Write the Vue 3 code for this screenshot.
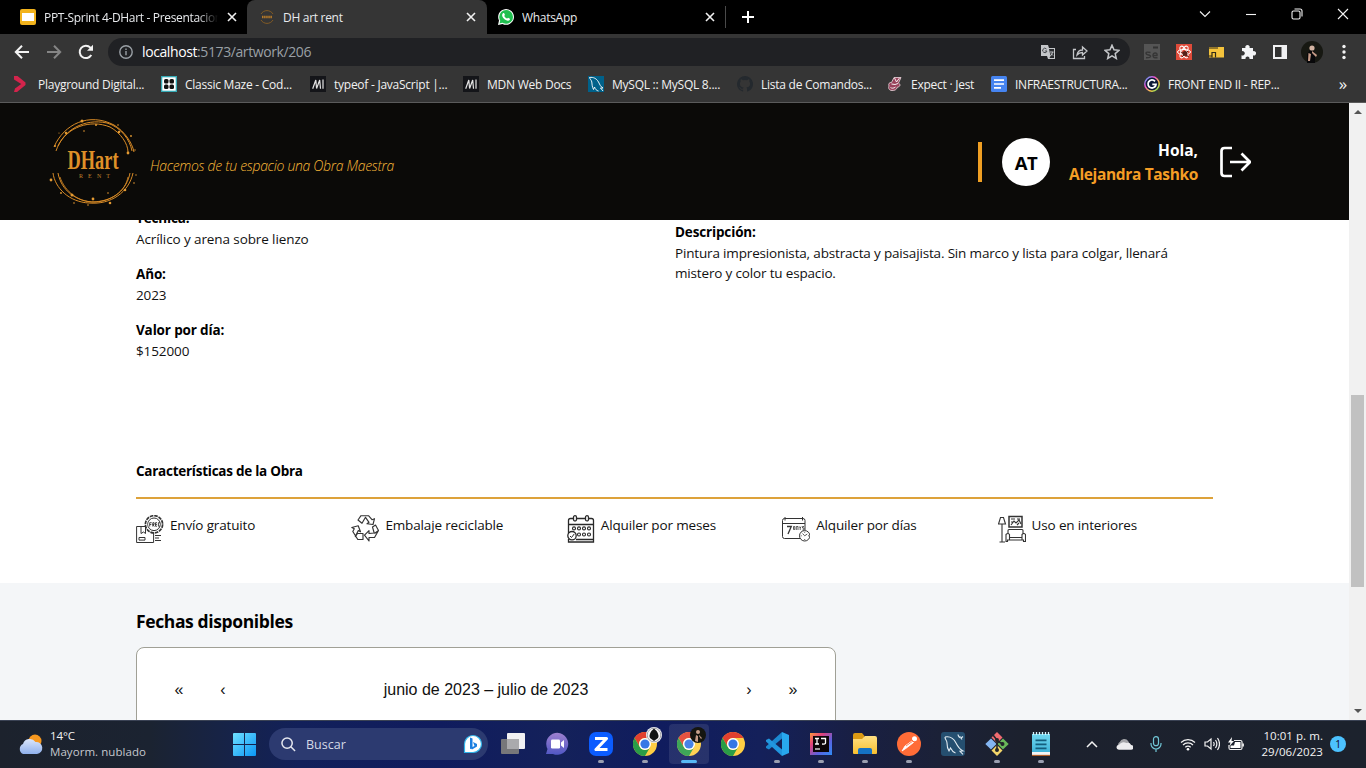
<script setup>
const tabs = [
  { title: 'PPT-Sprint 4-DHart - Presentacion', icon: 'slides', cls: 'first' },
  { title: 'DH art rent', icon: 'dhmini', cls: 'active' },
  { title: 'WhatsApp', icon: 'whatsapp', cls: 'last' },
]
const bookmarks = [
  { label: 'Playground Digital...', icon: 'play' },
  { label: 'Classic Maze - Cod...', icon: 'maze' },
  { label: 'typeof - JavaScript |...', icon: 'mdn' },
  { label: 'MDN Web Docs', icon: 'mdn' },
  { label: 'MySQL :: MySQL 8....', icon: 'mysql' },
  { label: 'Lista de Comandos...', icon: 'github' },
  { label: 'Expect · Jest', icon: 'jest' },
  { label: 'INFRAESTRUCTURA...', icon: 'docs' },
  { label: 'FRONT END II - REP...', icon: 'gring' },
]
const features = [
  { label: 'Envío gratuito', icon: 'free' },
  { label: 'Embalaje reciclable', icon: 'recycle' },
  { label: 'Alquiler por meses', icon: 'months' },
  { label: 'Alquiler por días', icon: 'days' },
  { label: 'Uso en interiores', icon: 'indoor' },
]
const apps = [
  { icon: 'taskview' }, { icon: 'chat' }, { icon: 'zoomapp', run: true },
  { icon: 'chrome', run: true, badge: 'dark' }, { icon: 'chrome', run: true, badge: 'photo', focus: true },
  { icon: 'chrome' }, { icon: 'vscode', run: true }, { icon: 'idea', run: true },
  { icon: 'folder', run: true }, { icon: 'postman', run: true }, { icon: 'workbench' },
  { icon: 'git', run: true }, { icon: 'notepad', run: true },
]
</script>

<template>
  <svg class="defs" aria-hidden="true">
    <defs>
      <linearGradient id="win" x1="0" y1="0" x2="1" y2="1"><stop offset="0" stop-color="#6fe0ff" /><stop offset="1" stop-color="#0a96f5" /></linearGradient>
      <linearGradient id="fold" x1="0" y1="0" x2="0" y2="1"><stop offset="0" stop-color="#ffe083" /><stop offset="1" stop-color="#f8bf2f" /></linearGradient>
      <linearGradient id="cloud" x1="0" y1="0" x2="0" y2="1"><stop offset="0" stop-color="#dbe6fb" /><stop offset="1" stop-color="#8fb0ec" /></linearGradient>
      <linearGradient id="chatg" x1="0" y1="0" x2="0" y2="1"><stop offset="0" stop-color="#9d80cf" /><stop offset="1" stop-color="#5057c4" /></linearGradient>
      <linearGradient id="ideag" x1="0" y1="0" x2="1" y2="1"><stop offset="0" stop-color="#fc9a3c" /><stop offset=".3" stop-color="#e0417c" /><stop offset=".65" stop-color="#5a62e0" /><stop offset="1" stop-color="#2f8df5" /></linearGradient>
      <linearGradient id="rainbow" x1="0" y1="0" x2="1" y2="1"><stop offset="0" stop-color="#3fb8ff" /><stop offset=".35" stop-color="#f04bd0" /><stop offset=".7" stop-color="#ffd43a" /><stop offset="1" stop-color="#45e07c" /></linearGradient>
      <linearGradient id="noteg" x1="0" y1="0" x2="0" y2="1"><stop offset="0" stop-color="#71d8f0" /><stop offset="1" stop-color="#3db2d8" /></linearGradient>
    </defs>
    <symbol id="slides" viewBox="0 0 16 16"><rect width="16" height="16" rx="2" fill="#f2b31c" /><rect x="2" y="4" width="12" height="8" fill="#fff" /></symbol>
    <symbol id="dhmini" viewBox="0 0 16 16"><g fill="none" stroke="#8a5f23" stroke-width=".9"><path d="M2 5A7 7 0 0 1 14 5M2 11a7 7 0 0 0 12 0" /><path d="M3 8h10" stroke="#b67a28" stroke-width="2.400" stroke-dasharray="1.500 .6" /></g></symbol>
    <symbol id="whatsapp" viewBox="0 0 16 16"><path d="M0 16l1-4.500A7.900 7.900 0 1 1 4.500 15z" fill="#fff" /><circle cx="8.100" cy="7.900" r="6.900" fill="#1fbf4f" /><path d="M1.500 14.500l1-3.500 2.500 2.500z" fill="#1fbf4f" /><path d="M5 4.300c.8-.8 1.300-.3 1.900 1.400.1.500-.7 1-.6 1.300.5 1.100 1.400 2 2.600 2.500.4.100.8-1 1.200-.8 1.800.8 2.200 1 1.700 2-1 1.800-4 1-6-1.200S3.700 5.500 5 4.300z" fill="#fff" /></symbol>
    <symbol id="play" viewBox="0 0 16 16"><path d="M0 0h3.500l8 6.500v2.500L3 16H0l1-3.500L7.200 8 0 3.500z" fill="#d3244c" /></symbol>
    <symbol id="maze" viewBox="0 0 16 16"><rect width="16" height="16" fill="#35a9b5" /><rect x="1.300" y="1.300" width="13.400" height="13.400" fill="#fff" /><g fill="#111"><rect x="3" y="3" width="4.500" height="4.500" rx="1.500" /><rect x="8.500" y="3" width="4.500" height="4.500" rx="1.500" /><rect x="3" y="8.500" width="4.500" height="4.500" rx="1.500" /><rect x="8.500" y="8.500" width="4.500" height="4.500" rx="1.500" /></g></symbol>
    <symbol id="mdn" viewBox="0 0 16 16"><rect width="16" height="16" fill="#141519" /><path d="M2.700 12.800L5.800 4 6.600 12.500 9.700 4l.8 8.800M13 3.500v9.300" fill="none" stroke="#e4e4e4" stroke-width="1.200" stroke-linejoin="bevel" /></symbol>
    <symbol id="mysql" viewBox="0 0 16 16"><rect width="16" height="16" fill="#00618a" /><path d="M1.500 1.500c4-.6 7 1 9 4.500 1.500 3 2 4.500 4.500 6l-2.500 0 2.500 3M1.500 1.500c.5 2 2 2.500 2.300 4.500.4 3 .2 4.500 1.700 7.500l1-2.500c1 2.500 2 3.500 4 4" fill="none" stroke="#fff" stroke-width=".9" /></symbol>
    <symbol id="github" viewBox="0 0 16 16"><path fill="#24292e" d="M8 0a8 8 0 0 0-2.530 15.590c.4.070.55-.17.55-.38v-1.490c-2.230.48-2.700-.94-2.700-.94-.36-.93-.89-1.170-.89-1.170-.73-.5.050-.49.050-.49.8.060 1.230.83 1.230.83.710 1.230 1.870.87 2.330.67.070-.52.280-.87.510-1.070-1.780-.2-3.640-.89-3.640-3.950 0-.87.310-1.590.82-2.150-.08-.2-.36-1.020.08-2.120 0 0 .67-.21 2.200.82a7.600 7.600 0 0 1 4 0c1.530-1.040 2.200-.82 2.200-.82.440 1.100.16 1.920.080 2.120.51.560.82 1.270.82 2.150 0 3.070-1.870 3.750-3.650 3.950.29.250.54.730.54 1.480v2.190c0 .21.150.46.550.38A8 8 0 0 0 8 0z" /></symbol>
    <symbol id="jest" viewBox="0 0 16 16"><path d="M7 1.500h7l-2.500 5.500c2.500 1.500 1.500 4-1 4-1 3-3 3.500-5.500 3.500-3 0-4-2.500-3-4.500C1 8 2.500 6 4.500 6.500z" fill="#99425b" stroke="#eed9df" stroke-width=".8" /><path d="M7.500 2l2 4 3-4M4.500 8l3.500 .5 3-1M3.500 11.500c1.500 1 3 1 5-.5" fill="none" stroke="#fff" stroke-width=".9" /></symbol>
    <symbol id="docs" viewBox="0 0 16 16"><rect width="16" height="16" rx="1.500" fill="#4684f0" /><path d="M3 4.200h10M3 8h10M3 11.800h7" stroke="#fff" stroke-width="1.700" /></symbol>
    <symbol id="gring" viewBox="0 0 16 16"><circle cx="8" cy="8" r="7.200" fill="#0c1a38" stroke="url(#rainbow)" stroke-width="1.500" /><path d="M11 5.300A4 4 0 1 0 12 8.300H8.300" fill="none" stroke="#fff" stroke-width="1.800" /></symbol>

    <symbol id="free" viewBox="0 0 28 28"><g fill="none" stroke="#333" stroke-width="1"><path d="M9 11.500H.6v16h17V18M5 11.500v7l2.500-1.500 2 1.500v-7M3 22.500h6v2.600H3zM19 20.500h6M19 23h4M19 25.500h6" /><circle cx="18" cy="9.300" r="6.300" /><circle cx="18" cy="9.300" r="8.600" stroke-width="1.700" stroke-dasharray="3.600 .9" /></g><path d="M12.600 7.500h10.800v3.700H12.600z" fill="#fff" /><path d="M13.700 11.500V7.700h2M13.700 9.500h1.600M16.800 11.500V7.700h1.300v1.800h-1.300l1.500 2M21 7.700h-1.500v3.500H21M19.500 9.400H21M24 7.700h-1.600v3.500H24" fill="none" stroke="#333" stroke-width=".9" /></symbol>
    <symbol id="recycle" viewBox="0 0 28 28"><g fill="none" stroke="#333" stroke-width="1.150" stroke-linejoin="round"><path d="M7 5l3-4.300h7.500l3.500 4 2.500-1-1.500 5.800-6-.7 2-1.500-3.500-5-3.500 6zM10 .7h5" /><path d="M21.500 12l3-2 3 5.500-4 7h-5.500V26l-4.500-5.800 4.500-4.500v2.800l5.200-.5zM27.500 15.500l-4 3" /><path d="M12 18.500v6H6.800l-5-8 1.500-2.700L.8 12.500l6.400-1.700 2.300 6-2.200-1.200-3 6 2.200-3.200z" /></g></symbol>
    <symbol id="months" viewBox="0 0 28 28"><g fill="none" stroke="#292929" stroke-width="1.300"><path d="M1.500 18V5.500q0-2 2-2H6M9.500 3.500h9M22 3.500h2.500q2 0 2 2V27H1.500V24M1.500 9.500h25M9 24.500h18" /><rect x="6.500" y=".7" width="3" height="5.200" rx="1.500" /><rect x="18.500" y=".7" width="3" height="5.200" rx="1.500" /><g stroke-width="1.100"><circle cx="7" cy="13.400" r="1.500" /><circle cx="12" cy="13.400" r="1.500" /><circle cx="17" cy="13.400" r="1.500" /><circle cx="22" cy="13.400" r="1.500" /><circle cx="12" cy="19.500" r="1.500" /><circle cx="17" cy="19.500" r="1.500" /><circle cx="22" cy="19.500" r="1.500" /></g><circle cx="5" cy="20.700" r="4.200" fill="#fff" /><path d="M3 21l1.500 1.500L7.200 19" stroke-width="1" /></g></symbol>
    <symbol id="days" viewBox="0 0 28 28"><g fill="none" stroke="#333" stroke-width="1"><path d="M18 23.500H2.500q-2 0-2-2v-16q0-2 2-2h18.500q2 0 2 2V15M.5 8.500H23M3 2v3.500M20.500 2v3.500M4 3.500h15" /><path d="M5 11.500h4.300L6 19" stroke-width="1.300" /><path d="M11.500 11.500v3h1.300v-3zM14.300 15v-3.500H16V15M17.300 11.500l.9 1.500.9-1.500M18.200 13v2M22 11.500h-1.500V13H22v2h-1.500" stroke-width=".8" /><circle cx="22.700" cy="20.800" r="5.200" fill="#fff" /><path d="M20.500 18.500l2.200 2.300 2.600-1.800M22.700 16.800v1M22.700 24v1M18.700 20.800h1M26 20.800h1" stroke-width=".8" /></g></symbol>
    <symbol id="indoor" viewBox="0 0 28 28"><g fill="none" stroke="#333" stroke-width="1.100"><path d="M2.500 2.500h3L7.500 9h-7zM4 9v17.500M1.500 27h5.500" /><rect x="11" y="1.500" width="13" height="10.500" stroke-width="1.500" /><path d="M13 10l3-4 2 2 3-3 2 4M13 4h4M19 4h3M13 7h2M19 10l2-2" /><path d="M10 18.500v-3q0-1 1-1h13q1 0 1 1v3M9.500 26.500H8v-7q2-2 3.500 0v3H24v-3q2-2 3.500 0v7h-2V25H9.500zM11.500 22.500V25M24 22.500V25" /></g></symbol>

    <symbol id="taskview" viewBox="0 0 24 24"><rect x="6" y="1" width="18" height="16" rx="1" fill="#f0f0f2" /><rect x="0" y="7" width="18" height="15" rx="1" fill="#77777a" /><rect x="6" y="7" width="12" height="10" fill="#aaaaad" /></symbol>
    <symbol id="chat" viewBox="0 0 24 24"><path d="M1 22l1.500-5A11 11 0 1 1 8 22z" fill="url(#chatg)" /><rect x="6" y="7.500" width="9" height="9" rx="1.300" fill="#fff" /><path d="M16 10.500l3-2.500v8l-3-2.500z" fill="#fff" /></symbol>
    <symbol id="zoomapp" viewBox="0 0 24 24"><rect width="24" height="24" rx="7" fill="#0b5cff" /><path d="M6 6.500h11.500L7 17.500h11.500" fill="none" stroke="#fff" stroke-width="3.200" stroke-linejoin="round" /></symbol>
    <symbol id="chrome" viewBox="0 0 24 24"><circle cx="12" cy="12" r="12" fill="#ffce43" /><path d="M1.600 6A12 12 0 0 1 22.400 6H12a6 6 0 0 0-5.200 9z" fill="#e2402f" /><path d="M1.600 6A12 12 0 0 0 12 24l5.200-9a6 6 0 0 1-10.400 0z" fill="#2a9d47" /><circle cx="12" cy="12" r="6" fill="#fff" /><circle cx="12" cy="12" r="4.600" fill="#3577e5" /></symbol>
    <symbol id="vscode" viewBox="0 0 24 24"><path d="M17 0l7 3v18l-7 3z" fill="#28a8ee" /><path d="M17 0v6.500L4 17.500 1 16V14.500z" fill="#1b88d1" /><path d="M17 24v-6.500L4 6.500 1 8v1.500z" fill="#2196df" /></symbol>
    <symbol id="idea" viewBox="0 0 24 24"><rect x="1" y="1" width="22" height="22" fill="url(#ideag)" /><rect x="4" y="4" width="16" height="16" fill="#0c0508" /><path d="M6 6.500h4M8 6.500V12M6 12h4M12 6.500h4.500V11q0 1.300-3.500 1" fill="none" stroke="#fff" stroke-width="1.300" /><path d="M6 17h5" stroke="#fff" stroke-width="1.200" /></symbol>
    <symbol id="folder" viewBox="0 0 24 24"><path d="M0 3q0-2 2-2h7l2.500 3v4H0z" fill="#dc9a13" /><path d="M0 7h9l3-3h10q2 0 2 2v15q0 1-1 1H1q-1 0-1-1z" fill="url(#fold)" /><path d="M5 22v-4q0-2 2-2h10q2 0 2 2v4z" fill="#1572c4" /></symbol>
    <symbol id="postman" viewBox="0 0 24 24"><circle cx="12" cy="12" r="12" fill="#ff6c37" /><path d="M5 19l3-5 7-5 1.500 1.500-7 5.500z" fill="#fff" stroke="#fff" stroke-width=".8" /><circle cx="17.500" cy="6.700" r="2.500" fill="#fff" /><path d="M9 14l7-5M15 8l2 2" stroke="#ff6c37" stroke-width=".8" /></symbol>
    <symbol id="workbench" viewBox="0 0 24 24"><rect width="24" height="24" rx="3" fill="#254f70" /><path d="M4 5c5-1 9 2 11 6s3 6 7 8l-3 .3 3 3M4 5c0 3 2 3 2 6s0 5 2 8l1.500-3c1 2 2 4 5 5" fill="none" stroke="#e4edf3" stroke-width="1.100" /><path d="M17 2.500q.5 3 3 3.500l2-1.500M18 5.500l1.500-1M20 6l1 1.500" stroke="#dbe7ef" fill="none" stroke-width="1.200" /></symbol>
    <symbol id="git" viewBox="0 0 24 24"><path d="M12 0l5.500 5.500L12 11 6.500 5.500z" fill="#f06b70" /><path d="M6 6.500L11.500 12 6 17.500.3 12z" fill="#83b5f2" /><path d="M18 6.500l5.700 5.500L18 17.500 12.500 12z" fill="#69b95a" /><path d="M12 13l5.500 5.500L12 24l-5.500-5.500z" fill="#f3d66a" /><g fill="#22252b" stroke="#22252b" stroke-width="1.600"><path d="M8 3l4 5v10M12 9l6 3" fill="none" /><circle cx="12" cy="8" r="1.200" /><circle cx="17.500" cy="12" r="1.200" /><circle cx="12" cy="18" r="1.200" /></g></symbol>
    <symbol id="notepad" viewBox="0 0 24 24"><path d="M3 2h18v19H3z" fill="url(#noteg)" /><path d="M3 20h18v3H3z" fill="#f3f3f3" /><path d="M3 23.500h18" stroke="#b05f28" stroke-width="1.300" /><path d="M6.500 8.300h11M6.500 12.300h11M6.500 16.300h11" stroke="#145e7d" stroke-width="1.700" /><path d="M4.500 0v3M7.500 0v3M10.500 0v3M13.500 0v3M16.500 0v3M19.500 0v3" stroke="#d4f4fc" stroke-width="1.300" /></symbol>
  </svg>

  <div class="screen">
    <div class="tabstrip">
      <div v-for="t in tabs" :key="t.title" class="tab" :class="t.cls">
        <svg class="i16"><use :href="'#' + t.icon" /></svg>
        <span class="tabtitle">{{ t.title }}</span>
        <svg class="x" viewBox="0 0 10 10"><path d="M1 1l8 8M9 1L1 9" /></svg>
      </div>
      <svg class="plus" viewBox="0 0 12 12"><path d="M6 0v12M0 6h12" /></svg>
      <div class="winctl">
        <svg viewBox="0 0 12 12"><path d="M1 3.500l5 5 5-5" /></svg>
        <svg viewBox="0 0 12 12"><path d="M1 6.500h10" /></svg>
        <svg viewBox="0 0 12 12"><rect x="1" y="3" width="8" height="8" rx="1.500" /><path d="M3.500 1H9q2 0 2 2v5.500" /></svg>
        <svg viewBox="0 0 12 12"><path d="M1 1l10 10M11 1L1 11" /></svg>
      </div>
    </div>

    <div class="toolbar">
      <div class="nav">
        <svg viewBox="0 0 16 16"><path d="M15 8H2M8 1.800L1.800 8 8 14.200" /></svg>
        <svg class="dim" viewBox="0 0 16 16"><path d="M1 8h13M8 1.800L14.200 8 8 14.200" /></svg>
        <svg viewBox="0 0 16 16"><path d="M13.300 11A6.200 6.200 0 1 1 12.400 3.600L14 5.200" /><path d="M15 .8v6H9z" class="solid" /></svg>
      </div>
      <div class="omnibox">
        <svg class="info" viewBox="0 0 14 14"><circle cx="7" cy="7" r="6.200" /><path d="M7 6v4.300M7 3.500v1.500" /></svg>
        <span class="url"><b>localhost</b>:5173/artwork/206</span>
        <svg class="oi" viewBox="0 0 16 16"><path d="M1 1h7l1 3h6v11H8L7 12H1z" fill="#c4c6c9" stroke="none" /><path d="M9 5h5v9H9.500l1-2z" fill="#292b2e" stroke="none" /><path d="M6.500 5A2.200 2.200 0 1 0 7 7H4.800" stroke="#45484c" stroke-width="1" /><path d="M10 8h3.500M10.500 12l2.500-4M11 9.500l2 2" stroke="#c4c6c9" stroke-width="1" /></svg>
        <svg class="oi" viewBox="0 0 16 16"><path d="M4 5.500H1.500v9h11V12M5 11c.5-3.500 2.500-5 5.500-5V3l4.500 4-4.500 4V8.500C8 8.500 6.500 9.300 5 11z" /></svg>
        <svg class="oi star" viewBox="0 0 16 16"><path d="M8 1.200l2 4.600 5 .5-3.800 3.300 1.100 4.900L8 11.900l-4.300 2.600 1.100-4.900L1 6.300l5-.5z" /></svg>
      </div>
      <div class="exts">
        <svg viewBox="0 0 16 16"><rect width="16" height="16" fill="#555" /><path d="M9 3.500h5" stroke="#333" stroke-width="2" /><path d="M6.500 8.500Q2 7.500 2 9t2.500 2 2 1.700-4.500 1M9 11.500h4Q13.500 9 11.200 9T9 11.500t2.500 2.200h2" fill="none" stroke="#363636" stroke-width="1.400" /></svg>
        <svg viewBox="0 0 16 16"><rect width="16" height="16" fill="#df4b3a" /><g fill="none" stroke="#fff" stroke-width="1"><ellipse cx="8" cy="8" rx="6.500" ry="2.600" /><ellipse cx="8" cy="8" rx="6.500" ry="2.600" transform="rotate(60 8 8)" /><ellipse cx="8" cy="8" rx="6.500" ry="2.600" transform="rotate(120 8 8)" /></g><circle cx="9" cy="9.500" r="2.500" fill="#572018" /><path d="M5 8l8 5M6 13l6-6" stroke="#572018" /></svg>
        <svg viewBox="0 0 16 16"><path d="M1 3h15v10.500H1z" fill="#f4c33c" /><path d="M1 4h9M4 13.500V8.500h3.500v5M0 12h4" fill="none" stroke="#302a18" stroke-width="1.200" /></svg>
        <svg viewBox="0 0 16 16"><path d="M2 4h3.500a2.200 2.200 0 1 1 4 0H13v3.300a2.200 2.200 0 1 1 0 4V15H9.400a2 2 0 1 0-3.800 0H1.500v-3.800a2.200 2.200 0 1 0 .5-4z" fill="#f3f4f6" /></svg>
        <svg viewBox="0 0 16 16"><path d="M1 1h14v14H1z" fill="#f1f1f3" /><path d="M3 3h6.500v10H3z" fill="#323232" /></svg>
        <svg class="avatar" viewBox="0 0 22 22"><circle cx="11" cy="11" r="11" fill="#171812" /><path d="M6 22V13l4-5 4 4v10z" fill="#08080a" /><circle cx="11" cy="7" r="2.600" fill="#d3b3a2" /><path d="M7 20l.5-8 2.500 1-1 7zM11 10l5 4-1 2-4-4z" fill="#c79b87" /></svg>
        <svg class="kebab" viewBox="0 0 4 16"><circle cx="2" cy="2.500" r="1.700" /><circle cx="2" cy="8" r="1.700" /><circle cx="2" cy="13.500" r="1.700" /></svg>
      </div>
    </div>

    <div class="bookmarks">
      <div v-for="(b, i) in bookmarks" :key="i" class="bm">
        <svg class="i16"><use :href="'#' + b.icon" /></svg><span>{{ b.label }}</span>
      </div>
      <span class="more">»</span>
    </div>

    <div class="viewport">
      <div class="page">
        <header>
          <svg class="logo" viewBox="0 0 90 90">
            <g fill="none" stroke="#d98b26" stroke-width="1">
              <path d="M6 30C16 7 41 -5 66 8 76 14 84 25 86 35" /><path d="M8 34C15 13 36 1 59 6 73 10 82 23 84 34" /><path d="M10 29C19 10 42 2 62 10 73 16 80 27 80 35" />
              <path d="M5 56c2 15 16 29 36 30 22 2 40-11 44-30" /><path d="M10 56c3 17 18 29 37 29 19-1 32-13 35-29" /><path d="M12 60c5 15 19 25 33 25 19-1 32-10 35-25" stroke-width=".8" />
            </g>
            <g fill="#e39a32"><circle cx="34" cy="4" r="1.500" /><circle cx="18" cy="16" r="1.200" /><circle cx="48" cy="8" r="1" /><circle cx="71" cy="15" r="1.300" /><circle cx="83" cy="19" r=".9" /><circle cx="80" cy="36" r="1.400" /><circle cx="7" cy="29" r="1" /><circle cx="3" cy="63" r="1.400" /><circle cx="13" cy="76" r=".9" /><circle cx="24" cy="78" r="1.500" /><circle cx="45" cy="82" r="1.400" /><circle cx="62" cy="86" r="1.300" /><circle cx="77" cy="73" r="1.300" /><circle cx="86" cy="66" r=".8" /><circle cx="88" cy="58" r=".7" /><circle cx="60" cy="76" r=".8" /><circle cx="36" cy="14" r=".8" /><circle cx="70" cy="8" r=".8" /><circle cx="40" cy="88" r=".8" /><circle cx="26" cy="86" r=".8" /><circle cx="87" cy="33" r=".7" /><circle cx="11" cy="16" r=".6" /></g>
            <text class="lg1" x="19.500" y="52" textLength="51" lengthAdjust="spacingAndGlyphs">DHart</text>
            <text class="lg2" x="31" y="61.300" textLength="31">RENT</text>
          </svg>
          <p class="slogan">Hacemos de tu espacio una Obra Maestra</p>
          <div class="user">
            <i class="bar"></i>
            <div class="initials">AT</div>
            <div class="hello"><span>Hola,</span><strong>Alejandra Tashko</strong></div>
            <svg class="logout" viewBox="0 0 32 32"><path d="M13 2H5.500Q2.500 2 2.500 5v22q0 3 3 3H13M11 16h20M22.500 7.500L31 16l-8.500 8.500" /></svg>
          </div>
        </header>

        <main>
          <section class="info-grid">
            <dl class="facts">
              <dt>Técnica:</dt><dd>Acrílico y arena sobre lienzo</dd>
              <dt>Año:</dt><dd>2023</dd>
              <dt>Valor por día:</dt><dd>$152000</dd>
            </dl>
            <dl class="desc">
              <dt>Descripción:</dt>
              <dd>Pintura impresionista, abstracta y paisajista. Sin marco y lista para colgar, llenará<br />mistero y color tu espacio.</dd>
            </dl>
          </section>
          <section class="features">
            <h3>Características de la Obra</h3>
            <ul>
              <li v-for="f in features" :key="f.icon"><svg><use :href="'#' + f.icon" /></svg><span>{{ f.label }}</span></li>
            </ul>
          </section>
          <section class="dates">
            <h2>Fechas disponibles</h2>
            <div class="calendar">
              <span class="cb">«</span><span class="cb">‹</span>
              <span class="month">junio de 2023 – julio de 2023</span>
              <span class="cb">›</span><span class="cb">»</span>
            </div>
          </section>
        </main>
      </div>
      <div class="scroll">
        <svg viewBox="0 0 8 4"><path d="M0 4l4-4 4 4z" /></svg>
        <div class="thumb"></div>
        <svg viewBox="0 0 8 4"><path d="M0 0h8L4 4z" /></svg>
      </div>
    </div>

    <div class="taskbar">
      <div class="weather">
        <svg viewBox="0 0 26 22"><circle cx="18" cy="8" r="6.500" fill="#f6981f" /><path d="M6 21a5.500 5.500 0 0 1 0-10 7 7 0 0 1 12.500-2A6 6 0 0 1 20 21z" fill="url(#cloud)" /></svg>
        <div><span>14°C</span><small>Mayorm. nublado</small></div>
      </div>
      <svg class="start" viewBox="0 0 24 24"><path d="M0 1q0-1 1-1h10.500v11.500H0zM12.500 0H23q1 0 1 1v10.500H12.500zM0 12.500h11.500V24H1q-1 0-1-1zM12.500 12.500H24V23q0 1-1 1H12.500z" fill="url(#win)" /></svg>
      <div class="search">
        <svg class="mag" viewBox="0 0 16 16"><circle cx="6.500" cy="6.500" r="5.500" /><path d="M10.500 10.500L15 15" /></svg>
        <span>Buscar</span>
        <svg class="bing" viewBox="0 0 20 20"><path d="M1.500 18.500V10a8.500 8.500 0 1 1 8.500 8.500z" fill="#fff" stroke="#2fb4ea" stroke-width="1.200" /><path d="M7 3.500l2.500 1v9L7 15.300zM10 8l4 2v2.500L9 15.500 7.500 14l4-2z" fill="#1b7fe0" /></svg>
      </div>
      <div class="apps">
        <div v-for="(a, i) in apps" :key="i" class="app" :class="{ run: a.run, focus: a.focus }">
          <svg class="ic"><use :href="'#' + a.icon" /></svg>
          <svg v-if="a.badge" class="badge" viewBox="0 0 16 16">
            <template v-if="a.badge === 'dark'"><circle cx="8" cy="8" r="8" fill="#f4f4f6" /><circle cx="8" cy="8" r="6.800" fill="none" stroke="#55585e" stroke-width=".5" /><path d="M8 1.500q6 5 4 9.500l-4 3-4-3Q2 6.500 8 1.500z" fill="#101314" /></template>
            <template v-else><circle cx="8" cy="8" r="8" fill="#15150f" /><circle cx="8" cy="5" r="2" fill="#c8a18c" /><path d="M5 14l1-6 2 1v6zM9 8l3 3-1 1-2-3z" fill="#c79b87" /></template>
          </svg>
        </div>
      </div>
      <div class="tray">
        <svg class="t-up" viewBox="0 0 12 8"><path d="M1 7l5-5 5 5" /></svg>
        <svg class="t-cloud" viewBox="0 0 18 12"><path d="M3 10a4 4 0 0 1 1-6 5 5 0 0 1 9-1l2 4z" fill="#a3a4a8" /><path d="M3 12a2.500 2.500 0 0 1 0-5 6 6 0 0 1 8-2 4 4 0 0 1 5 2 2.500 2.500 0 0 1 0 5z" fill="#ececee" /></svg>
        <svg class="t-mic" viewBox="0 0 12 16"><rect x="3.500" y=".7" width="5" height="9" rx="2.500" /><path d="M1 7v1a5 5 0 0 0 10 0V7M6 13v3" /></svg>
        <svg class="t-wifi" viewBox="0 0 16 13"><path d="M1 4.500a10 10 0 0 1 14 0M3 7a7 7 0 0 1 10 0M5.300 9.300a4 4 0 0 1 5.400 0" /><circle cx="8" cy="11.200" r="1.300" /></svg>
        <svg class="t-vol" viewBox="0 0 16 14"><path d="M1 5v4h2.500L7 12V2L3.500 5zM9.500 5q1.300 2 0 4M11.500 3q2.700 4 0 8M13.500 1q4 6 0 12" /></svg>
        <svg class="t-bat" viewBox="0 0 16 14"><path d="M6 3.500h6.500q1.500 0 1.500 1.500v6q0 1.500-1.500 1.500h-10Q1 12.500 1 11V8M15.300 6.500v3" /><path d="M7 5h5.500v6h-10V8.500H6z" fill="#fff" stroke="none" /><path d="M4 0L0 5.500h2.500L1.500 9 6 4H3.500z" fill="#fff" stroke="none" /></svg>
        <div class="clock"><span>10:01 p. m.</span><span>29/06/2023</span></div>
        <div class="notif">1</div>
      </div>
    </div>
  </div>
</template>

<style>
body { margin: 0; overflow: hidden; }
</style>

<style scoped>
* { box-sizing: border-box; }
.defs { position: absolute; width: 0; height: 0; }
.screen { width: 1366px; height: 768px; display: flex; flex-direction: column; overflow: hidden; font-family: "Open Sans", "Noto Sans", sans-serif; }
svg { flex: none; display: block; }
.i16 { width: 16px; height: 16px; }

.tabstrip { height: 34px; background: #000; display: flex; align-items: center; padding-left: 7px; }
.tab { width: 240px; height: 34px; display: flex; align-items: center; padding: 0 11px 0 12px; color: #e8eaed; font-size: 12px; letter-spacing: -0.3px; }
.tab .i16 { margin-right: 8px; }
.tab.first { padding: 0 10px 0 13px; }
.tab.first .tabtitle { -webkit-mask-image: linear-gradient(90deg, #000 88%, transparent); mask-image: linear-gradient(90deg, #000 88%, transparent); letter-spacing: -0.33px; }
.tab.active { background: #353535; border-radius: 8px 8px 0 0; }
.tab.last { border-right: 1px solid #4a4a4a; border-image: linear-gradient(transparent 7px, #4a4a4a 7px 27px, transparent 27px) 1; width: 239px; padding: 0 10px 0 11px; }
.tabtitle { flex: none; width: 174px; overflow: hidden; white-space: nowrap; }
.tab .x { width: 10px; height: 10px; margin-left: auto; fill: none; stroke: #f1f1f1; stroke-width: 1.600; }
.plus { width: 12px; height: 12px; margin-left: 16px; fill: none; stroke: #fff; stroke-width: 2; }
.winctl { display: flex; gap: 34px; margin-left: auto; padding-right: 17px; height: 34px; padding-top: 8px; }
.winctl svg { width: 12px; height: 12px; fill: none; stroke: #f4f4f4; stroke-width: 1.100; }

.toolbar { height: 34px; background: #353535; display: flex; align-items: center; padding: 2px 20px 0 14px; }
.nav { display: flex; gap: 16px; width: 94px; }
.nav svg { width: 16px; height: 16px; fill: none; stroke: #f3f3f3; stroke-width: 2; }
.nav .dim { stroke: #858585; }
.nav .solid { fill: #f3f3f3; stroke: none; }
.omnibox { width: 1022px; height: 28px; border-radius: 14px; background: #202124; display: flex; align-items: center; padding: 0 10px 0 11px; gap: 16px; }
.info { width: 14px; height: 14px; fill: none; stroke: #9aa0a6; stroke-width: 1.400; }
.url { margin-left: -7px; margin-right: auto; margin-top: -1px; color: #9aa0a6; font-size: 14px; letter-spacing: -0.4px; }
.url b { color: #fff; font-weight: 400; }
.oi { width: 16px; height: 16px; fill: none; stroke: #c4c6c9; stroke-width: 1.300; }
.oi.star { stroke-width: 1.500; }
.exts { display: flex; align-items: center; gap: 16px; margin-left: 14px; }
.exts svg { width: 16px; height: 16px; }
.exts .avatar { width: 22px; height: 22px; margin: 0 -3px; }
.exts .kebab { width: 4px; margin-left: 6px; fill: #f3f3f3; }

.bookmarks { height: 35px; background: #353535; border-bottom: 1px solid #5b5b5b; display: grid; grid-template-columns: 147px 149px 153px 125px 149px 150px 104px 153px 1fr auto; align-items: center; padding: 0 19px 2px 14px; color: #f1f1f1; font-size: 12px; letter-spacing: -0.25px; white-space: nowrap; }
.bm { display: flex; gap: 8px; align-items: center; }
.more { font-size: 17px; line-height: 16px; }

.viewport { height: 617px; display: flex; }
.page { width: 1349px; display: flex; flex-direction: column; overflow: hidden; background: #fff; }
header { position: relative; z-index: 1; height: 117px; flex: none; background: #0b0a08; display: flex; align-items: center; padding: 0 98px 0 48px; }
.logo { width: 90px; height: 90px; }
.lg1 { font: 700 27px "Liberation Serif", serif; fill: #df9028; }
.lg2 { font: 6px "Liberation Serif", serif; fill: #c0832c; }
.slogan { margin: 8px 0 0 12px; color: #f8b838; font-style: italic; font-weight: 300; font-size: 14px; letter-spacing: -0.31px; }
.user { margin-left: auto; display: flex; align-items: center; }
.bar { width: 4px; height: 40px; background: #f09f23; }
.initials { width: 48px; height: 48px; margin-left: 20px; border-radius: 50%; background: #fff; display: grid; place-items: center; font-weight: 700; font-size: 18.500px; letter-spacing: -0.4px; color: #000; padding-top: 1px; }
.hello { width: 148px; display: flex; flex-direction: column; align-items: flex-end; color: #fff; font-size: 15.500px; line-height: 24px; font-weight: 700; letter-spacing: 0; white-space: nowrap; }
.hello strong { color: #f59d25; font-weight: 700; letter-spacing: -0.35px; }
.logout { width: 32px; height: 32px; margin-left: 21px; fill: none; stroke: #fff; stroke-width: 2.700; }

main { height: 500px; flex: none; color: #111; font-size: 13.500px; }
.info-grid { display: grid; grid-template-columns: 539px 1fr; padding-left: 136px; height: 240px; }
dl, dd, h2, h3, ul { margin: 0; padding: 0; }
dt { font-weight: 700; line-height: 21px; font-size: 13.500px; letter-spacing: -0.15px; color: #000; }
dd { line-height: 20px; white-space: nowrap; letter-spacing: -0.1px; }
.facts { margin-top: -12px; }
.facts dd { margin-bottom: 15px; }
.desc { margin-top: 2px; }
.desc dd { letter-spacing: -0.165px; }
.features { padding: 0 136px; height: 123px; }
h3 { height: 39px; border-bottom: 2px solid #dda23a; font-size: 13.500px; line-height: 22px; letter-spacing: -0.26px; color: #000; }
ul { list-style: none; display: grid; grid-template-columns: repeat(5, 1fr); padding-top: 16px; }
li { display: flex; gap: 6px; line-height: 20px; letter-spacing: -0.15px; }
li svg { width: 28px; height: 28px; }
.dates { height: 137px; background: #f4f6f8; padding: 26px 136px 0; }
h2 { font-size: 17.500px; line-height: 25px; color: #000; letter-spacing: -0.38px; margin-bottom: 13px; }
.calendar { width: 700px; height: 90px; background: #fff; border: 1px solid #a0a096; border-radius: 8px; display: flex; align-items: center; padding: 0 20px 5px; font-family: "Liberation Sans", Arial, sans-serif; font-size: 16px; color: #111; }
.cb { width: 44px; text-align: center; }
.month { flex: 1; text-align: center; }

.scroll { width: 17px; background: #f1f1f1; display: flex; flex-direction: column; align-items: center; padding: 7px 0; }
.scroll svg { width: 8px; height: 4px; fill: #555; }
.thumb { width: 13px; height: 192px; margin: 281px 0 auto; background: #c1c1c1; }

.taskbar { height: 48px; border-top: 1px solid #3a4254; padding-bottom: 1px; display: flex; align-items: center; background: linear-gradient(90deg, #1c222d 0, #1b2331 150px, #16234a 235px, #12205a 300px, #101c5e 440px, #14215a 560px, #101c5e 660px, #14205a 760px, #191f42 860px, #1b2137 940px, #1c212e 1020px, #1c222d 100%); color: #f3f3f3; }
.weather { width: 233px; display: flex; align-items: center; padding-left: 17px; gap: 7px; font-size: 11.500px; line-height: 16px; letter-spacing: -0.1px; }
.weather svg { width: 26px; height: 22px; }
.weather div { display: flex; flex-direction: column; }
.weather small { font-size: 11.500px; color: #c5c8ce; letter-spacing: 0.06px; }
.start { width: 23px; height: 23px; }
.search { width: 219px; height: 32px; margin-left: 13px; border-radius: 16px; background: #2c3a70; display: flex; align-items: center; padding: 0 5px 0 12px; gap: 10px; font-size: 12.500px; color: #d5d9e6; letter-spacing: 0; }
.mag { width: 15px; height: 15px; fill: none; stroke: #e6e8f0; stroke-width: 1.600; }
.bing { width: 20px; height: 20px; margin-left: auto; }
.apps { display: flex; margin-left: 3px; }
.app { width: 44px; height: 46px; display: flex; align-items: center; justify-content: center; position: relative; }
.ic { width: 24px; height: 24px; }
.app.run::after { content: ""; position: absolute; bottom: 4px; width: 6px; height: 3px; border-radius: 2px; background: #9a9fb0; }
.app.focus::before { content: ""; position: absolute; inset: 3px 2px; border-radius: 4px; background: #ffffff18; }
.app.focus::after { width: 16px; background: #58b9f5; }
.badge { position: absolute; width: 16px; height: 16px; left: 23px; top: 6px; }
.tray { flex: 1; display: flex; align-items: center; padding: 0 20px 0 23px; }
.tray svg { fill: none; stroke: #f3f3f3; stroke-width: 1.200; }
.tray .t-up { width: 12px; height: 8px; stroke-width: 1.500; }
.tray .t-cloud { width: 17px; height: 12px; margin-left: 18px; stroke: none; }
.tray .t-mic { width: 12px; height: 16px; margin-left: 17px; stroke: #71c6d6; }
.tray .t-wifi { width: 16px; height: 13px; margin-left: 18px; }
.tray .t-wifi circle { fill: #fff; stroke: none; }
.tray .t-vol { width: 16px; height: 14px; margin-left: 8px; }
.tray .t-bat { width: 16px; height: 14px; margin-left: 8px; }
.clock { flex: 1; display: flex; flex-direction: column; align-items: flex-end; font-size: 11.500px; line-height: 16px; letter-spacing: 0.05px; padding-right: 7px; white-space: nowrap; }
.notif { width: 16px; height: 16px; border-radius: 50%; background: #4cc2ff; color: #102; font-size: 10px; line-height: 16px; text-align: center; }
</style>
